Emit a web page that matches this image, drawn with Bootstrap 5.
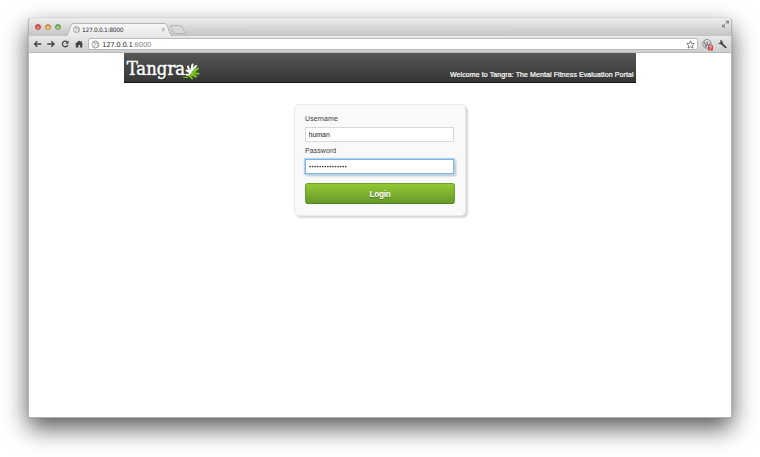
<!DOCTYPE html>
<html lang="en">
<head>
<meta charset="utf-8">
<title>Tangra</title>
<link href="https://cdn.jsdelivr.net/npm/bootstrap@5.3.0/dist/css/bootstrap.min.css" rel="stylesheet">
<style>
body{background:#fff;font-family:"Liberation Sans",Arial,sans-serif;font-size:7px;line-height:1;overflow:hidden;padding:18px 28px 39px}
svg{display:block;flex:none}
.window{width:704px;height:400px;background:#fff;border:1px solid #b5b5b5;border-top-color:#e8e8e8;border-radius:4px 4px 1px 1px;box-shadow:0 0 1px rgba(0,0,0,.35),0 10px 25px rgba(0,0,0,.66)}
.tabstrip{height:17px;background:linear-gradient(#eee,#d9d9d9 45%,#c4c4c4);border-radius:4px 4px 0 0}
.lights{gap:4px;padding:5px 0 0 5.500px}
.light{width:6px;height:6px;border-radius:50%;border:1px solid #b34642;background:radial-gradient(circle at 50% 80%,#ffaaa5,#dc514c 60%)}
.light.min{border-color:#b98442;background:radial-gradient(circle at 50% 80%,#ffe89e,#e9a248 60%)}
.light.max{border-color:#629556;background:radial-gradient(circle at 50% 80%,#c9f0a5,#77b35e 60%)}
.tabs{margin-left:4px}
.toolbar{height:17px;background:linear-gradient(#e9e9e9,#cecece);border-bottom:1px solid #b9b9b9;padding:0 3px 0 4px}
.address{height:12px;background:#fff;border:1px solid #b9b9b9;border-radius:2px;margin-left:5px;padding:0 2px 0 2px;flex:1}
.banner{width:512px;height:30px;background:linear-gradient(#575757,#353535);border-bottom:1px solid #161616;padding:0 2px 0 2px}
.welcome{padding-bottom:3px}
.login{width:172px;height:112px;margin-top:21px;background:#f9f9f9;border:1px solid #e9e9e9;border-radius:5px;box-shadow:2px 2px 2px rgba(0,0,0,.16);padding:10px 10px 0 10px;color:#3b3b3b}
.login label{display:block;font-size:7px;line-height:8px;height:12px;letter-spacing:.07px}
.login .form-control{height:15px;min-height:0;border:1px solid #d9d9d9;border-radius:0;padding:0 3px 0 2.500px;font-size:7px;line-height:13px;color:#222;margin-bottom:5px;width:149px;background:#fff}
.login .form-control.active-field{border-color:#80b4e0;box-shadow:0 0 1px 1px #b4d4ed,2px 2px 2px rgba(0,0,0,.25);margin-bottom:9px}
.login .btn{display:block;width:150px;height:21px;padding:0;border:1px solid #6ba12b;border-bottom-color:#527f25;border-radius:3px;background:linear-gradient(#94c832,#669a2c);color:#fff;font-size:8.300px;font-weight:700;line-height:20px;letter-spacing:-.35px;text-shadow:0 1px 1px rgba(0,0,0,.3)}
</style>
<script src="https://cdn.jsdelivr.net/npm/bootstrap@5.3.0/dist/js/bootstrap.bundle.min.js"></script>
</head>
<body>
<main class="window">
  <div class="tabstrip d-flex">
    <div class="lights d-flex"><span class="light"></span><span class="light min"></span><span class="light max"></span></div>
    <svg class="tabs" width="122" height="17" viewBox="65 19 122 17">
      <defs><linearGradient id="tab" x2="0" y2="1"><stop stop-color="#f8f8f8"/><stop offset="1" stop-color="#e9e9e9"/></linearGradient></defs>
      <path d="M171 25.500h9q1.500 0 2 1.500l2.500 5q.5 1.500-1 1.500h-8q-1.500 0-2.200-1.500l-2.600-5q-.7-1.500.3-1.500z" fill="#d8d8d8" stroke="#aaa" stroke-width=".7"/>
      <path d="M64 36.500q3-.5 3.700-2.500l3.300-8.500q.8-2 2.500-2h91q1.800 0 2.500 2l3.300 8.500q.7 2 3.700 2.500z" fill="url(#tab)" stroke="#a5a5a5" stroke-width=".8"/>
      <g fill="none" stroke="#8b8f94" stroke-width=".7"><circle cx="76.500" cy="29.500" r="3.100" fill="#f5f5f5"/><path d="M74.300 27.700l1.800.5.5 1.300-1.200 1.200.4 1.700M77.300 26.800l-.3 1.400 2 .8-.4 1.800-1.200 1"/></g>
      <text x="82" y="31.700" font-family="DejaVu Sans,sans-serif" font-size="6" textLength="41.500" fill="#333">127.0.0.1:8000</text>
      <path d="M161.600 27.800l3.400 3.400m0-3.400l-3.400 3.400" stroke="#999" stroke-width="1"/>
    </svg>
    <svg class="ms-auto" style="margin-right:1px" width="9" height="12" viewBox="0 0 9 12"><path d="M4.500 1.500H8V5zM1 5v3.500h3.500z" fill="#888"/><path d="M5 4.500L7 2.500M2 7.500l2-2" stroke="#888" stroke-width="1.300"/></svg>
  </div>
  <div class="toolbar d-flex align-items-center">
    <svg width="50" height="14" viewBox="33.200 37 50 14" fill="none" stroke="#444" stroke-width="1.300">
      <path d="M41.500 44H34.700M37.500 41.200L34.700 44l2.800 2.800M47.500 44h6.800M51.500 41.200l2.800 2.800-2.800 2.800M67.700 42.300a2.800 2.800 0 1 0 .3 2.700"/>
      <path d="M68.700 40.500v3.200h-3.200z" fill="#444" stroke="none"/><path d="M75 44.300l4.300-3.700 1.500 1.300v-1h1.200v2l1.500 1.400h-1V47.500h-2.200v-2.600h-1.600v2.600H76v-3.200z" fill="#444" stroke="none"/>
    </svg>
    <div class="address d-flex align-items-center">
      <svg width="9" height="9" viewBox="0 0 9 9" fill="none" stroke="#7e8388" stroke-width=".7"><circle cx="4.500" cy="4.500" r="3.500"/><path d="M2 2.300l2 .6.5 1.400L3 5.700l.5 2M5.300 1.200L5 2.900l2.300 1-.5 2-1.500 1.200"/></svg>
      <svg width="54" height="10" viewBox="0 0 54 10"><text x="2" y="7.500" font-family="DejaVu Sans,sans-serif" font-size="7" textLength="49.500" fill="#333">127.0.0.1<tspan fill="#888">:8000</tspan></text></svg>
      <svg class="ms-auto" width="9" height="9" viewBox="0 0 9 9"><path d="M4.500.8l1.100 2.500 2.700.3-2 1.800.6 2.700-2.400-1.400-2.400 1.400.6-2.700-2-1.800 2.700-.3z" fill="#fff" stroke="#666" stroke-width=".8"/></svg>
    </div>
    <svg width="30" height="14" viewBox="698.500 37 30 14">
      <circle cx="707.500" cy="43.800" r="4.200" fill="#eee" stroke="#747474" stroke-width=".9"/>
      <path d="M704.300 42.200h1.500m.9 0h2.300M704.800 42.400l1.700 4.300 1.300-3.700 1.300 3.700 1.500-4" fill="none" stroke="#666" stroke-width="1"/>
      <rect x="708.500" y="45.300" width="5" height="5.200" rx=".7" fill="#cf4446"/><text x="711" y="49.700" text-anchor="middle" font-size="5" font-family="Liberation Sans" fill="#fff">?</text>
      <path d="M721.500 43l4.700 4.300" stroke="#444" stroke-width="1.800" stroke-linecap="round"/><path d="M720.700 39.900a2.500 2.500 0 0 1 2.300 3.400 2.500 2.500 0 0 1-4.300-.6l1.700.2.800-1z" fill="#444"/>
    </svg>
  </div>
  <header class="banner mx-auto d-flex justify-content-between align-items-end">
    <svg width="78" height="29" viewBox="126 53 78 29">
      <g font-family="DejaVu Serif Condensed,DejaVu Serif,serif" font-stretch="condensed" font-size="18.500">
      <text x="127.300" y="75.500" textLength="58.500" lengthAdjust="spacingAndGlyphs" fill="#111">Tangra</text>
      <text x="126.700" y="74.500" textLength="58.500" lengthAdjust="spacingAndGlyphs" fill="#fff" stroke="#fff" stroke-width=".45">Tangra</text></g>
      <g fill="none" stroke="#fff" stroke-width="2" stroke-linecap="round"><path d="M190.500 74l2-9.500M190 73l-2-6.500M190 72.500l-3.500-2M189.500 74.500l-3 .2M191.500 71l4.500-5"/></g>
      <g fill="none" stroke="#7ac81c" stroke-width="2" stroke-linecap="round"><path d="M189.500 76l8.500-7.500M193 73l5.500.8M191.500 74.500l4.500 2M190 76l2 2.500M194 71.500l1-2.500"/><path d="M190 76q-2.500 2.500-6.500 1.500" stroke-width="1"/></g>
    </svg>
    <span class="welcome"><svg width="184" height="9" viewBox="0 0 184 9"><text x="0" y="7" font-family="Liberation Sans,Arial,sans-serif" font-size="7" textLength="183.500" fill="#fff" stroke="#fff" stroke-width=".2">Welcome to Tangra: The Mental Fitness Evaluation Portal</text></svg></span>
  </header>
  <form class="login mx-auto">
    <label for="user">Username</label>
    <input id="user" class="form-control" value="human">
    <label for="pass">Password</label>
    <div id="pass" class="form-control active-field"><svg width="40" height="13" viewBox="0 0 40 13"><path d="M1 6.500h36.500" stroke="#333" stroke-width="1.700" stroke-linecap="round" stroke-dasharray="0 2.550"/></svg></div>
    <button type="button" class="btn">Login</button>
  </form>
</main>
</body>
</html>
